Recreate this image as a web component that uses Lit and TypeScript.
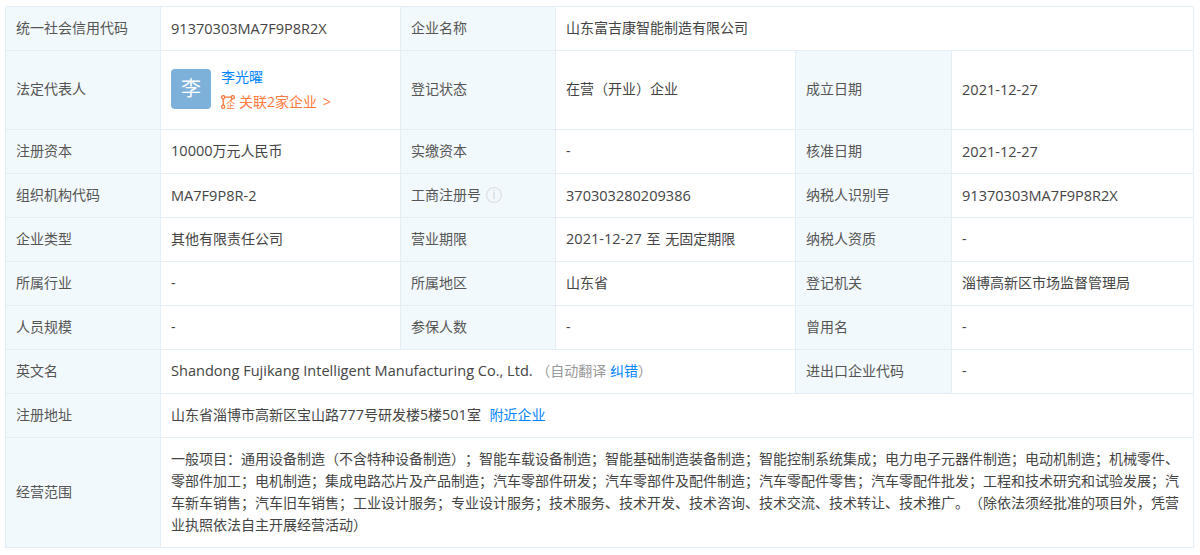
import { LitElement, html, css, svg } from "lit";
import { customElement } from "lit/decorators.js";

const relIcon = svg`<circle cx="2.2" cy="2.2" r="1.6"/><circle cx="11.8" cy="2.2" r="1.6"/><circle cx="2.2" cy="11.8" r="1.6"/><path d="M3.8 2.2h6.4M2.2 3.8v6.4M11.2 3.8 9.8 5.6"/><text x="5" y="13" class="qi">企</text>`;

@customElement("app-root")
export class AppRoot extends LitElement {
  static styles = css`
    :host {
      display: block;
      padding: 6px 7px 0 5px;
      background: #fff;
      font-family: "Open Sans", "Noto Sans CJK SC", sans-serif;
      font-size: 14px;
      color: #444;
      text-spacing-trim: space-all;
    }
    table {
      table-layout: fixed;
      border-collapse: collapse;
      width: 1188px;
    }
    td {
      border: 1px solid #e4eef6;
      padding: 0 10px 2px;
      vertical-align: middle;
      line-height: 22px;
      box-sizing: border-box;
    }
    tr { height: 44px; }
    tr.tall { height: 79px; }
    tr.scope { height: 110px; }
    td.l {
      background: #f2f9fc;
      color: #555;
    }
    a { color: #0084ff; text-decoration: none; }
    .n { font-size: 14.55px; }
    .range { word-spacing: 1px; }
    .person { display: flex; align-items: center; gap: 10px; }
    .avatar {
      width: 40px;
      height: 40px;
      border-radius: 4px;
      background: #7db1da;
      color: #fff;
      font-size: 20px;
      display: flex;
      align-items: center;
      justify-content: center;
    }
    .names { display: flex; flex-direction: column; gap: 3px; }
    .rel { display: flex; align-items: center; gap: 4px; color: #ff7a3d; white-space: nowrap; }
    .rel svg { fill: none; stroke: #ff7a3d; stroke-width: 1.3; flex: none; overflow: visible; }
    .rel .qi { font-size: 9px; fill: #ff7a3d; stroke: none; }
    .gt { margin-left: 2px; }
    .info { display: inline-block; vertical-align: -3px; margin-left: 5px; }
    .info svg { display: block; fill: none; stroke: #dde1e5; stroke-width: 1.2; }
    .info text { fill: #d0d4d8; stroke: none; font-size: 12px; }
    .muted { color: #999; }
    .near { margin-left: 5px; }
    .scope-text { margin: 0; }
  `;

  render() {
    return html`<table>
      <colgroup>
        <col style="width:155px" /><col style="width:240px" /><col style="width:155px" />
        <col style="width:240px" /><col style="width:156px" /><col style="width:242px" />
      </colgroup>
      <tbody>
        <tr>
          <td class="l">统一社会信用代码</td><td class="n">91370303MA7F9P8R2X</td>
          <td class="l">企业名称</td><td colspan="3">山东富吉康智能制造有限公司</td>
        </tr>
        <tr class="tall">
          <td class="l">法定代表人</td>
          <td>
            <div class="person">
              <div class="avatar">李</div>
              <div class="names">
                <a>李光曜</a>
                <span class="rel">
                  <svg width="14" height="14" viewBox="0 0 14 14">${relIcon}</svg>
                  关联2家企业<span class="gt">&gt;</span>
                </span>
              </div>
            </div>
          </td>
          <td class="l">登记状态</td><td>在营（开业）企业</td>
          <td class="l">成立日期</td><td class="n">2021-12-27</td>
        </tr>
        <tr>
          <td class="l">注册资本</td><td><span class="n">10000</span>万元人民币</td>
          <td class="l">实缴资本</td><td>-</td>
          <td class="l">核准日期</td><td class="n">2021-12-27</td>
        </tr>
        <tr>
          <td class="l">组织机构代码</td><td class="n">MA7F9P8R-2</td>
          <td class="l">工商注册号<span class="info"><svg width="16" height="16" viewBox="0 0 16 16"><circle cx="8" cy="8" r="7.4"/><text x="8" y="12.4" text-anchor="middle">i</text></svg></span></td>
          <td class="n">370303280209386</td>
          <td class="l">纳税人识别号</td><td class="n">91370303MA7F9P8R2X</td>
        </tr>
        <tr>
          <td class="l">企业类型</td><td>其他有限责任公司</td>
          <td class="l">营业期限</td><td class="range"><span class="n">2021-12-27</span> 至 无固定期限</td>
          <td class="l">纳税人资质</td><td>-</td>
        </tr>
        <tr>
          <td class="l">所属行业</td><td>-</td>
          <td class="l">所属地区</td><td>山东省</td>
          <td class="l">登记机关</td><td>淄博高新区市场监督管理局</td>
        </tr>
        <tr>
          <td class="l">人员规模</td><td>-</td>
          <td class="l">参保人数</td><td>-</td>
          <td class="l">曾用名</td><td>-</td>
        </tr>
        <tr>
          <td class="l">英文名</td>
          <td colspan="3"><span class="n">Shandong Fujikang Intelligent Manufacturing Co., Ltd.</span> <span class="muted">（自动翻译 <a>纠错</a>）</span></td>
          <td class="l">进出口企业代码</td><td>-</td>
        </tr>
        <tr>
          <td class="l">注册地址</td>
          <td colspan="5">山东省淄博市高新区宝山路<span class="n">777</span>号研发楼5楼<span class="n">501</span>室 <a class="near">附近企业</a></td>
        </tr>
        <tr class="scope">
          <td class="l">经营范围</td>
          <td colspan="5"><p class="scope-text">一般项目：通用设备制造（不含特种设备制造）；智能车载设备制造；智能基础制造装备制造；智能控制系统集成；电力电子元器件制造；电动机制造；机械零件、零部件加工；电机制造；集成电路芯片及产品制造；汽车零部件研发；汽车零部件及配件制造；汽车零配件零售；汽车零配件批发；工程和技术研究和试验发展；汽车新车销售；汽车旧车销售；工业设计服务；专业设计服务；技术服务、技术开发、技术咨询、技术交流、技术转让、技术推广。（除依法须经批准的项目外，凭营业执照依法自主开展经营活动）</p></td>
        </tr>
      </tbody>
    </table>`;
  }
}
